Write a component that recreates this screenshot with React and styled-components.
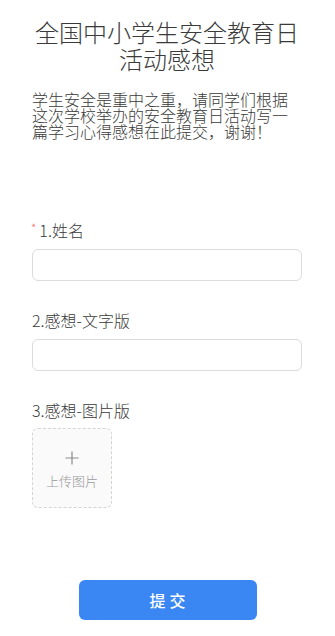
import React from "react";
import styled, { createGlobalStyle } from "styled-components";

const Global = createGlobalStyle`
  html, body { margin: 0; padding: 0; background: #fff; }
  body { font-family: "Noto Sans CJK SC", "Noto Sans", sans-serif; color: #3a3a3a; }
  * { box-sizing: border-box; }
`;

const Page = styled.div`
  width: 335px;
  min-height: 636px;
  padding: 18px 33px 16px 32px;
  display: flex;
  flex-direction: column;
`;

const Title = styled.h1`
  margin: 0;
  font-size: 24px;
  line-height: 27px;
  font-weight: 300;
  text-align: center;
  color: #3a3a3a;
`;

const Desc = styled.p`
  margin: 19px 0 0;
  font-size: 16px;
  line-height: 16px;
  font-weight: 300;
  color: #3a3a3a;
`;

const Form = styled.div`
  margin-top: 80px;
  display: flex;
  flex-direction: column;
`;

const Field = styled.div`
  display: flex;
  flex-direction: column;
  gap: ${(p) => p.$gap || 8}px;
  margin-bottom: 28px;
`;

const Label = styled.div`
  font-size: 16px;
  line-height: 22px;
  font-weight: 300;
  color: #3a3a3a;
  display: flex;
  align-items: flex-start;
`;

const Star = styled.span`
  color: #f56c6c;
  font-size: 12px;
  line-height: 18px;
  margin-right: 3px;
  margin-left: -1px;
`;

const Input = styled.input`
  width: 100%;
  height: 32px;
  border: 1px solid #dcdcdc;
  border-radius: 6px;
  background: #fff;
  padding: 0 10px;
  font-size: 14px;
  outline: none;
`;

const Upload = styled.div`
  width: 80px;
  height: 80px;
  border: 1px dashed #d4d4d4;
  border-radius: 6px;
  background: #fafafa;
  display: flex;
  flex-direction: column;
  align-items: center;
  justify-content: center;
  gap: 9px;
  padding-top: 2px;
`;

const UploadText = styled.span`
  font-size: 13px;
  line-height: 14px;
  font-weight: 300;
  color: #999;
`;

const Footer = styled.div`
  margin-top: auto;
  display: flex;
  justify-content: center;
  padding-left: 1px;
`;

const Button = styled.button`
  width: 178px;
  height: 40px;
  border: none;
  border-radius: 6px;
  background: #3a87f4;
  color: #fff;
  font-family: inherit;
  font-size: 16px;
  letter-spacing: 4px;
  text-indent: 4px;
  font-weight: 500;
`;

const Plus = () => (
  <svg width="14" height="14" viewBox="0 0 14 14">
    <path d="M7 0.5V13.5M0.5 7H13.5" stroke="#8c8c8c" strokeWidth="1.2" fill="none" />
  </svg>
);

export default function App() {
  return (
    <>
      <Global />
      <Page>
        <Title>全国中小学生安全教育日活动感想</Title>
        <Desc>学生安全是重中之重，请同学们根据这次学校举办的安全教育日活动写一篇学习心得感想在此提交，谢谢！</Desc>
        <Form>
          <Field>
            <Label><Star>*</Star>1.姓名</Label>
            <Input />
          </Field>
          <Field>
            <Label>2.感想-文字版</Label>
            <Input />
          </Field>
          <Field $gap={7}>
            <Label>3.感想-图片版</Label>
            <Upload>
              <Plus />
              <UploadText>上传图片</UploadText>
            </Upload>
          </Field>
        </Form>
        <Footer>
          <Button>提交</Button>
        </Footer>
      </Page>
    </>
  );
}
